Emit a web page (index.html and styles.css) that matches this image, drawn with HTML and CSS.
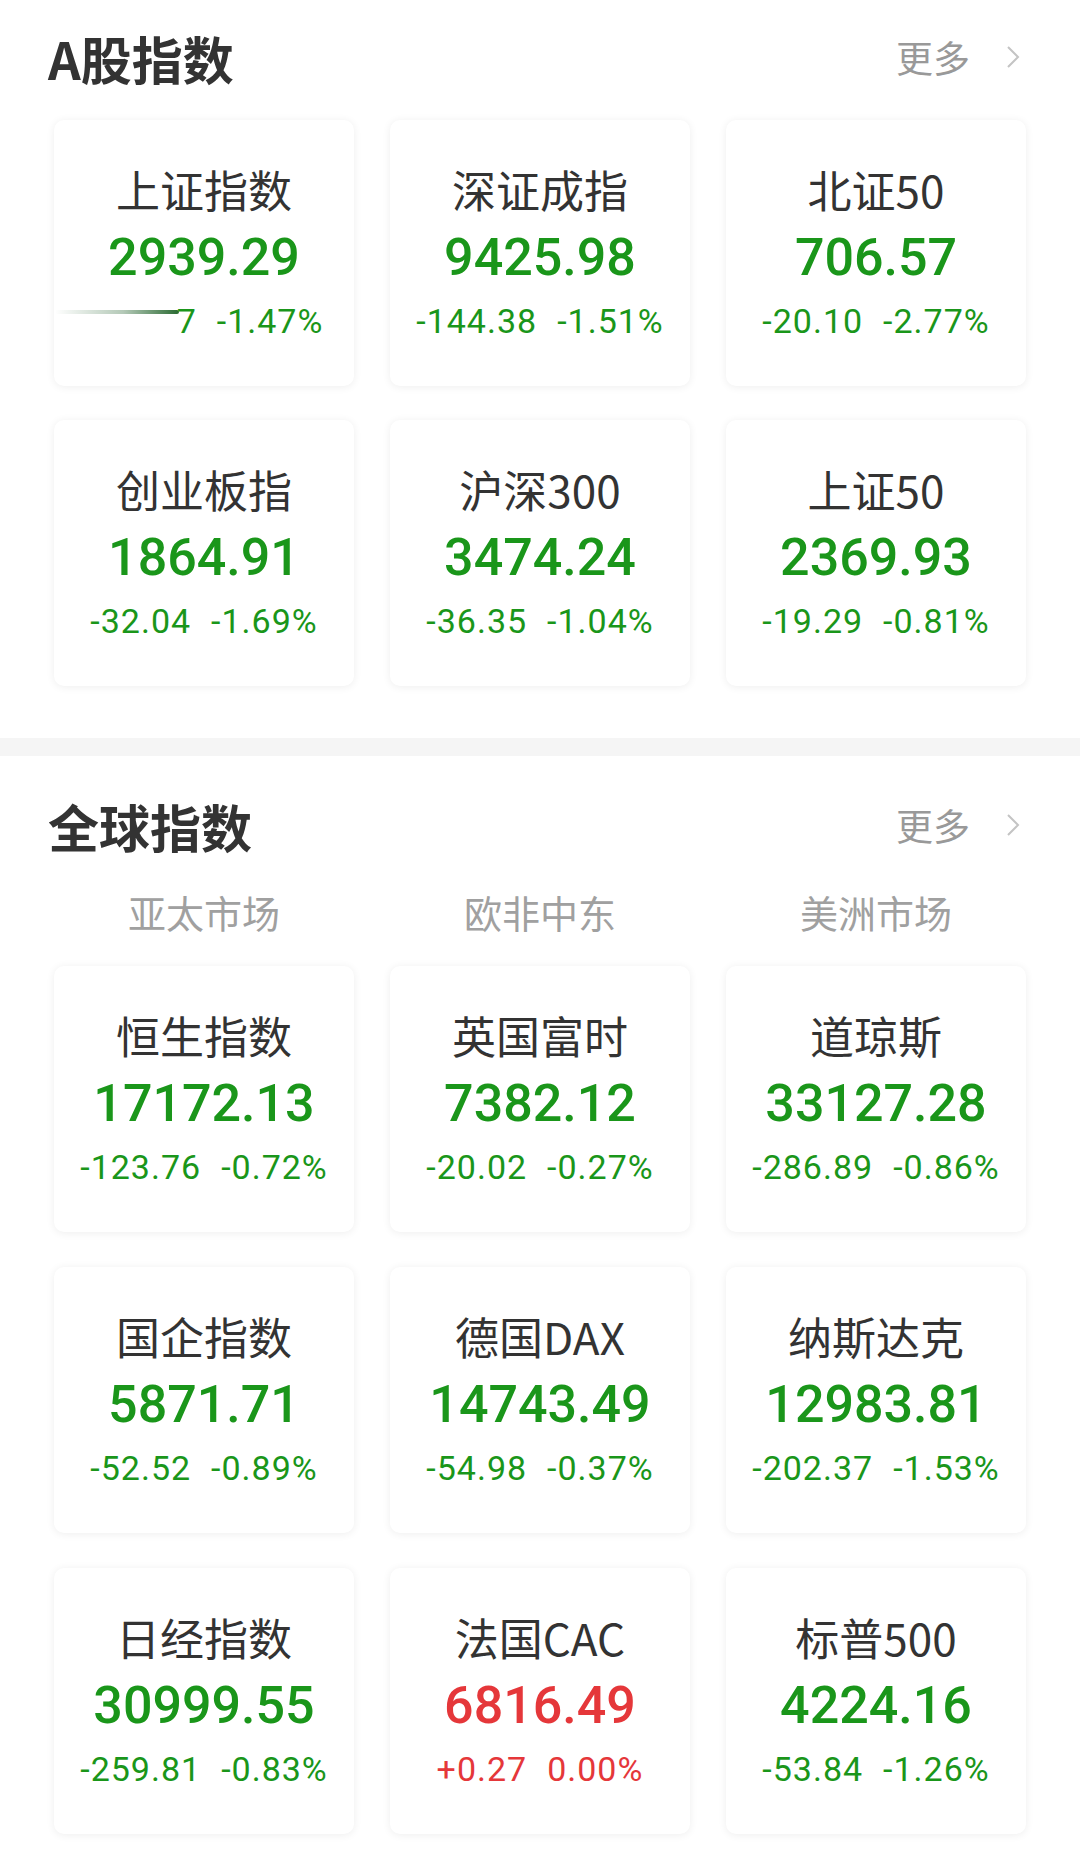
FILE: index.html
```html
<!DOCTYPE html>
<html lang="zh-CN">
<head>
    <meta charset="UTF-8">
    <meta name="viewport" content="width=device-width, initial-scale=1.0">
    <title>指数</title>
    <link rel="stylesheet" href="styles.css">
</head>
<body>

<section class="section">
    <div class="section-head">
        <h2 class="section-title">A股指数</h2>
        <a class="more">更多
            <svg class="chevron" width="14" height="24" viewBox="0 0 14 24"><polyline points="2,2 12,12 2,22" fill="none" stroke="#c4c4c4" stroke-width="2"/></svg>
        </a>
    </div>

    <div class="card-grid">
        <div class="card">
            <div class="name">上证指数</div>
            <div class="price down">2939.29</div>
            <div class="change down smudged"><span><i class="streak"></i>7</span><span>-1.47%</span></div>
        </div>
        <div class="card">
            <div class="name">深证成指</div>
            <div class="price down">9425.98</div>
            <div class="change down"><span>-144.38</span><span>-1.51%</span></div>
        </div>
        <div class="card">
            <div class="name">北证50</div>
            <div class="price down">706.57</div>
            <div class="change down"><span>-20.10</span><span>-2.77%</span></div>
        </div>
        <div class="card">
            <div class="name">创业板指</div>
            <div class="price down">1864.91</div>
            <div class="change down"><span>-32.04</span><span>-1.69%</span></div>
        </div>
        <div class="card">
            <div class="name">沪深300</div>
            <div class="price down">3474.24</div>
            <div class="change down"><span>-36.35</span><span>-1.04%</span></div>
        </div>
        <div class="card">
            <div class="name">上证50</div>
            <div class="price down">2369.93</div>
            <div class="change down"><span>-19.29</span><span>-0.81%</span></div>
        </div>
    </div>
</section>

<div class="divider"></div>

<section class="section section-global">
    <div class="section-head">
        <h2 class="section-title">全球指数</h2>
        <a class="more">更多
            <svg class="chevron" width="14" height="24" viewBox="0 0 14 24"><polyline points="2,2 12,12 2,22" fill="none" stroke="#c4c4c4" stroke-width="2"/></svg>
        </a>
    </div>

    <div class="tabs">
        <span>亚太市场</span>
        <span>欧非中东</span>
        <span>美洲市场</span>
    </div>

    <div class="card-grid grid-global">
        <div class="card">
            <div class="name">恒生指数</div>
            <div class="price down">17172.13</div>
            <div class="change down"><span>-123.76</span><span>-0.72%</span></div>
        </div>
        <div class="card">
            <div class="name">英国富时</div>
            <div class="price down">7382.12</div>
            <div class="change down"><span>-20.02</span><span>-0.27%</span></div>
        </div>
        <div class="card">
            <div class="name">道琼斯</div>
            <div class="price down">33127.28</div>
            <div class="change down"><span>-286.89</span><span>-0.86%</span></div>
        </div>
        <div class="card">
            <div class="name">国企指数</div>
            <div class="price down">5871.71</div>
            <div class="change down"><span>-52.52</span><span>-0.89%</span></div>
        </div>
        <div class="card">
            <div class="name">德国DAX</div>
            <div class="price down">14743.49</div>
            <div class="change down"><span>-54.98</span><span>-0.37%</span></div>
        </div>
        <div class="card">
            <div class="name">纳斯达克</div>
            <div class="price down">12983.81</div>
            <div class="change down"><span>-202.37</span><span>-1.53%</span></div>
        </div>
        <div class="card">
            <div class="name">日经指数</div>
            <div class="price down">30999.55</div>
            <div class="change down"><span>-259.81</span><span>-0.83%</span></div>
        </div>
        <div class="card">
            <div class="name">法国CAC</div>
            <div class="price up">6816.49</div>
            <div class="change up"><span>+0.27</span><span>0.00%</span></div>
        </div>
        <div class="card">
            <div class="name">标普500</div>
            <div class="price down">4224.16</div>
            <div class="change down"><span>-53.84</span><span>-1.26%</span></div>
        </div>
    </div>
</section>

</body>
</html>
```

FILE: styles.css
```css
body {
    margin: 0;
    background: #fff;
    color: #333;
    font-family: "Noto Sans CJK SC", "Noto Sans", sans-serif;
}

.section {
    padding: 32px 54px 52px;
}
.section-global {
    padding-top: 44px;
    padding-bottom: 40px;
}

.section-head {
    display: flex;
    justify-content: space-between;
    align-items: center;
    height: 56px;
    margin: 0 6px 0 -6px;
}
.section-title {
    margin: -4px 0 0;
    font-size: 51px;
    font-weight: 700;
    line-height: 56px;
    color: #333;
}
.more {
    display: flex;
    align-items: center;
    gap: 36px;
    font-size: 37px;
    line-height: 48px;
    color: #999;
    margin-top: -6px;
}

.divider {
    height: 18px;
    background: #f5f5f5;
}

.tabs {
    display: grid;
    grid-template-columns: repeat(3, 300px);
    column-gap: 36px;
    margin-top: 31px;
    font-size: 38px;
    line-height: 50px;
    color: #a0a0a0;
    text-align: center;
}

.card-grid {
    display: grid;
    grid-template-columns: repeat(3, 300px);
    column-gap: 36px;
    row-gap: 34px;
    margin-top: 32px;
}
.grid-global {
    margin-top: 29px;
    row-gap: 35px;
}

.card {
    height: 266px;
    box-sizing: border-box;
    padding-top: 43px;
    background: #fff;
    border-radius: 10px;
    box-shadow: 0 1px 8px rgba(0, 0, 0, 0.07);
    text-align: center;
}
.name {
    font-size: 44px;
    line-height: 52px;
    color: #333;
}
.price {
    margin-top: 13px;
    font-family: Roboto, "Noto Sans", sans-serif;
    font-weight: 500;
    font-size: 52px;
    line-height: 60px;
}
.change {
    display: flex;
    justify-content: center;
    gap: 20px;
    margin-top: 15px;
    font-family: Roboto, "Noto Sans", sans-serif;
    font-size: 34px;
    line-height: 36px;
    letter-spacing: 1px;
}
.smudged {
    padding-right: 30px;
}

.down {
    color: #1a961a;
}
.up {
    color: #e5373a;
}

/* smudge left over on the first card */
.streak {
    display: inline-block;
    width: 124px;
    height: 4px;
    margin-right: -2px;
    vertical-align: 19px;
    border-radius: 2px;
    background: linear-gradient(to right, rgba(40, 100, 50, 0), rgba(40, 100, 50, 0.35) 55%, #2a6a32);
}
```
